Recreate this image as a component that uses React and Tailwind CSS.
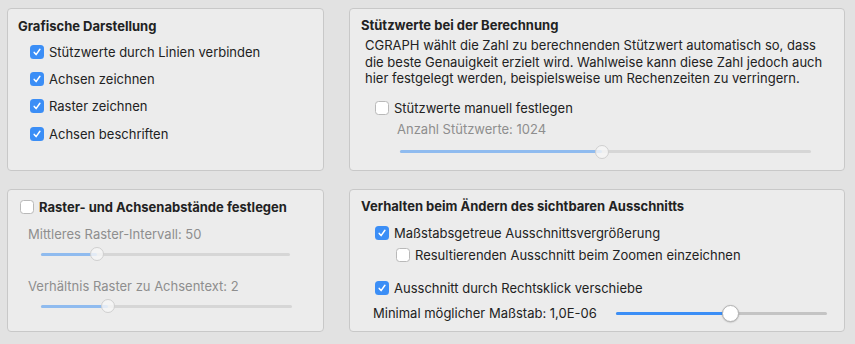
import React from 'react'

const font = { fontFamily: 'Inter, "Noto Sans", sans-serif' }

function Check({ on }) {
  if (on) {
    return (
      <span className="flex h-[14px] w-[14px] shrink-0 items-center justify-center rounded-[3.5px] bg-[#3b8ef6]">
        <svg width="10" height="10" viewBox="0 0 10 10" fill="none">
          <path d="M2.2 5.4 L4.1 7.6 L7.9 2.3" stroke="white" strokeWidth="1.5" strokeLinecap="round" strokeLinejoin="round" />
        </svg>
      </span>
    )
  }
  return <span className="h-[14px] w-[14px] shrink-0 rounded-[3.5px] border border-[#b9b9b9] bg-white" />
}

function Row({ on, children, className = '' }) {
  return (
    <div className={`flex items-center gap-[5px] ${className}`}>
      <Check on={on} />
      <span>{children}</span>
    </div>
  )
}

function Slider({ width, pos, active }) {
  return (
    <div className="relative h-[16px]" style={{ width }}>
      <div className={`absolute left-0 right-0 top-[6.5px] h-[3px] rounded-full ${active ? 'bg-[#c4c4c4]' : 'bg-[#d6d6d6]'}`} />
      <div className={`absolute left-0 top-[6.5px] h-[3px] rounded-full ${active ? 'bg-[#3b8ef6]' : 'bg-[#8fbbef]'}`} style={{ width: pos }} />
      {active ? (
        <div className="absolute top-[-0.5px] h-[17px] w-[17px] rounded-full border border-[#b4b4b4] bg-white shadow-[0_0.5px_1.5px_rgba(0,0,0,0.25)]" style={{ left: pos - 8.5 }} />
      ) : (
        <div className="absolute top-[1px] h-[14px] w-[14px] rounded-full border border-[#cfcfcf] bg-[#f6f6f6]/80" style={{ left: pos - 7 }} />
      )}
    </div>
  )
}

export default function App() {
  return (
    <div className="h-[344px] w-[855px] bg-[#e2e2e2] pl-[7px] pt-[8px] text-[13px] leading-[16px] text-[#222]" style={font}>
      <div className="grid grid-cols-[317px_496px] grid-rows-[163px_143px] gap-x-[25px] gap-y-[18px]">
        <div className="rounded-[4px] border border-[#c8c8c8] bg-[#ececec] pl-[10px] pt-[9px]">
          <div className="font-bold">Grafische Darstellung</div>
          <div className="ml-[12px] mt-[4px]">
            <Row on className="h-[27.4px]">Stützwerte durch Linien verbinden</Row>
            <Row on className="h-[27.4px]">Achsen zeichnen</Row>
            <Row on className="h-[27.4px]">Raster zeichnen</Row>
            <Row on className="h-[27.4px]">Achsen beschriften</Row>
          </div>
        </div>

        <div className="rounded-[4px] border border-[#c8c8c8] bg-[#ececec] pl-[11px] pt-[8px]">
          <div className="font-bold">Stützwerte bei der Berechnung</div>
          <p className="ml-[4px] mt-[4px] leading-[16.5px]">
            CGRAPH wählt die Zahl zu berechnenden Stützwert automatisch so, dass<br />
            die beste Genauigkeit erzielt wird. Wahlweise kann diese Zahl jedoch auch<br />
            hier festgelegt werden, beispielsweise um Rechenzeiten zu verringern.
          </p>
          <Row className="ml-[14px] mt-[13px]">Stützwerte manuell festlegen</Row>
          <div className="ml-[36px] mt-[5px] text-[#8e8e8e]">Anzahl Stützwerte: 1024</div>
          <div className="ml-[39px] mt-[7px]">
            <Slider width={411} pos={202} />
          </div>
        </div>

        <div className="rounded-[4px] border border-[#c8c8c8] bg-[#ececec] pl-[12px] pt-[9px]">
          <Row>
            <span className="font-bold">Raster- und Achsenabstände festlegen</span>
          </Row>
          <div className="ml-[8px] mt-[11px] text-[#8e8e8e]">Mittleres Raster-Intervall: 50</div>
          <div className="ml-[21px] mt-[4px]">
            <Slider width={249} pos={56} />
          </div>
          <div className="ml-[8px] mt-[16px] text-[#8e8e8e]">Verhältnis Raster zu Achsentext: 2</div>
          <div className="ml-[21px] mt-[4px]">
            <Slider width={251} pos={67} />
          </div>
        </div>

        <div className="rounded-[4px] border border-[#c8c8c8] bg-[#ececec] pl-[11px] pt-[8px]">
          <div className="font-bold">Verhalten beim Ändern des sichtbaren Ausschnitts</div>
          <Row on className="ml-[14px] mt-[11px]">Maßstabsgetreue Ausschnittsvergrößerung</Row>
          <Row className="ml-[35px] mt-[6px]">Resultierenden Ausschnitt beim Zoomen einzeichnen</Row>
          <Row on className="ml-[14px] mt-[17px]">Ausschnitt durch Rechtsklick verschiebe</Row>
          <div className="ml-[12px] mt-[9px] flex items-center">
            <span className="w-[243px]">Minimal möglicher Maßstab: 1,0E-06</span>
            <Slider width={211} pos={114} active />
          </div>
        </div>
      </div>
    </div>
  )
}
